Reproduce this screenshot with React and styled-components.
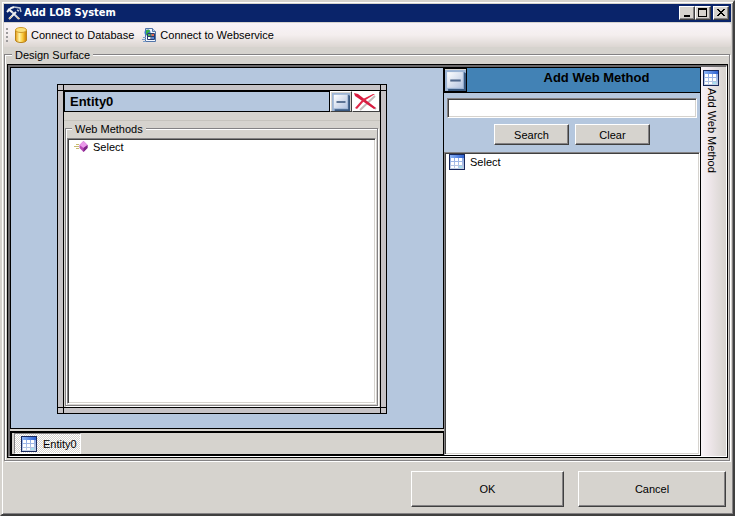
import React, { useState } from "react";
import styled, { createGlobalStyle } from "styled-components";

const GlobalStyle = createGlobalStyle`
  * {
    box-sizing: border-box;
  }
  body {
    margin: 0;
    background-color: #d6d3ce;
    color: #000;
    font: 11px/14px "Liberation Sans", Arial, sans-serif;
  }
  button, input {
    font: inherit;
    color: inherit;
  }
  svg {
    display: block;
    flex: none;
  }
`;

const Window = styled.div`
  display: flex;
  flex-direction: column;
  min-height: 100vh;
  padding: 2px;
  border: 2px solid;
  border-color: #d6d3ce #404040 #404040 #d6d3ce;
  box-shadow: inset 1px 1px 0 #fff, inset -1px -1px 0 #848284;
  background-color: #d6d3ce;
`;
const TitleBar = styled.header`
  display: flex;
  align-items: center;
  height: 18px;
  padding: 0 2px;
  background-color: #0a246a;
  color: white;
`;
const WindowTitle = styled.h1`
  flex: 1;
  margin: 0 0 0 2px;
  font: bold 11px/16px "DejaVu Sans Condensed", "Liberation Sans", sans-serif;
`;
const CaptionButton = styled.button`
  display: flex;
  align-items: center;
  justify-content: center;
  width: 16px;
  height: 14px;
  padding: 0;
  margin-left: ${(props) => (props.$spaced ? "2px" : "0")};
  border: 1px solid;
  border-color: #fff #404040 #404040 #fff;
  box-shadow: inset -1px -1px 0 #848284;
  background-color: #d6d3ce;
`;
const ToolBar = styled.nav`
  display: flex;
  align-items: center;
  height: 24px;
  margin-top: 1px;
  padding-left: 2px;
  border-radius: 0 2px 2px 0;
  background: linear-gradient(#f8f3f7, #f4eeee 50%, #dcd6d2);
`;
const Grip = styled.span`
  width: 2px;
  height: 15px;
  margin-right: 5px;
  background: repeating-linear-gradient(#9c9a9c 0 2px, transparent 2px 4px);
`;
const ToolButton = styled.button`
  display: flex;
  align-items: center;
  gap: 2px;
  padding: 0;
  margin-right: 8px;
  border: none;
  background: none;
`;

const Group = styled.fieldset`
  display: flex;
  flex: 1;
  min-width: 0;
  margin: ${(props) => (props.$inner ? "0 2px 1px 1px" : "0 1px 0 0")};
  padding: ${(props) => (props.$inner ? "3px 1px 1px" : "3px 1px 1px 2px")};
  border: 1px solid #848284;
  box-shadow: inset 1px 1px 0 #fff, 1px 1px 0 #fff;
`;
const Legend = styled.legend`
  margin-left: ${(props) => (props.$inner ? "5px" : "5px")};
  padding: 2px 3px 0;
  line-height: 12px;
  background-color: #d6d3ce;
`;
const Frame = styled.div`
  display: flex;
  flex: 1;
  min-width: 0;
  border: 1px solid #000;
`;
const FrameBevel = styled.div`
  display: flex;
  flex: 1;
  min-width: 0;
  border: solid;
  border-width: 2px 1px 1px 2px;
  border-color: #6b696b #fff #fff #6b696b;
`;

const DesignPane = styled.main`
  display: flex;
  flex-direction: column;
  flex: 1;
  min-width: 0;
`;
const Canvas = styled.div`
  flex: 1;
  padding: 16px 46px 14px;
  border: 1px solid #000;
  background-color: #b5c7de;
`;
const EntityFrame = styled.section`
  display: grid;
  grid-template: 5px 1fr 5px / 5px 1fr 5px;
  width: 330px;
  height: 330px;
  border: 1px solid #000;
  background-color: #c6c3c6;
`;
const Handle = styled.span`
  outline: 1px solid #000;
`;
const EntityBody = styled.div`
  grid-area: 2 / 2;
  display: flex;
  flex-direction: column;
  min-width: 0;
  border: 1px solid #000;
  background-color: #d6d3ce;
`;
const EntityHeader = styled.div`
  display: flex;
  height: 21px;
`;
const EntityName = styled.h2`
  flex: 1;
  margin: 0;
  padding-left: 5px;
  border: 1px solid #000;
  background-color: #b5c7de;
  font: bold 13px/20px "Liberation Sans", Arial, sans-serif;
`;
const IconButton = styled.button`
  display: flex;
  align-items: center;
  justify-content: center;
  width: ${(props) => props.$width};
  padding: 0;
  border: 1px solid;
  border-color: ${(props) => (props.$flat ? "#000" : "#fff #404040 #404040 #fff")};
  background-color: ${(props) => props.$color || "#d6d3ce"};
`;
const Divider = styled.div`
  height: 9px;
  border-bottom: 1px solid #c6c3bd;
`;

const List = styled.ul`
  flex: 1;
  min-width: 0;
  margin: 0;
  padding: ${(props) => (props.$large ? "0 4px" : "0 5px")};
  list-style: none;
  border: 1px solid;
  border-color: #848284 #fff #fff #848284;
  box-shadow: inset 1px 1px 0 #404040, inset -1px -1px 0 #d6d3ce;
  background-color: white;
`;
const Item = styled.li`
  display: flex;
  align-items: center;
  gap: ${(props) => (props.$large ? "5px" : "4px")};
  height: ${(props) => (props.$large ? "18px" : "16px")};
`;

const TaskBar = styled.div`
  display: flex;
  height: 25px;
  margin-top: 2px;
  padding-left: 2px;
  border: 2px solid #000;
  border-right-width: 1px;
`;
const TaskButton = styled.button`
  display: flex;
  align-items: center;
  gap: 6px;
  padding: 0 3px 0 6px;
  border: 1px solid;
  border-color: #848284 #fff #fff #848284;
  background: repeating-conic-gradient(#fff 0 25%, #d6d3ce 0 50%) 0 0 / 2px 2px;
`;

const SidePanel = styled.aside`
  display: flex;
  flex-direction: column;
  width: 257px;
  border: solid #000;
  border-width: 1px 1px 1px 0;
  background-color: #b5c7de;
`;
const PanelHeader = styled.div`
  display: flex;
  height: 25px;
  border-bottom: 1px solid #000;
  background-color: #4282b5;
`;
const PanelTitle = styled.h2`
  flex: 1;
  margin: 0;
  padding-left: 26px;
  text-align: center;
  font: bold 13px/20px "Liberation Sans", Arial, sans-serif;
`;
const SearchForm = styled.form`
  display: flex;
  flex-wrap: wrap;
  justify-content: center;
  gap: 6px;
  padding: 5px 3px 7px;
`;
const SearchInput = styled.input`
  width: 100%;
  height: 20px;
  padding: 0 3px;
  border: 1px solid;
  border-color: #848284 #fff #fff #848284;
  border-radius: 0;
  box-shadow: inset 1px 1px 0 #404040, inset -1px -1px 0 #d6d3ce;
  background-color: white;
  outline: none;
`;
const Button = styled.button`
  width: ${(props) => props.$width || "75px"};
  height: ${(props) => (props.$large ? "36px" : "21px")};
  padding: 0;
  border: 1px solid;
  border-color: #fff #404040 #404040 #fff;
  box-shadow: inset -1px -1px 0 #848284;
  background-color: #d6d3ce;
`;
const TabStrip = styled.div`
  width: 25px;
  padding: 3px 0 0 2px;
  background: linear-gradient(to right, #f8f3f7, #f0e8ec 30%, #d6d3ce);
`;
const SideTab = styled.button`
  display: flex;
  flex-direction: column;
  align-items: flex-start;
  gap: 2px;
  padding: 0;
  border: none;
  background: none;
`;
const SideTabText = styled.span`
  writing-mode: vertical-rl;
  line-height: 18px;
`;
const Footer = styled.footer`
  display: flex;
  justify-content: flex-end;
  gap: 14px;
  padding: 10px 5px 5px;
`;

const ToolsIcon = () => (
  <svg width="16" height="16" viewBox="0 0 16 16" fill="none">
    <path d="M5 6l8 8" stroke="#d8dce4" strokeWidth="2" />
    <path d="M10 7L3 14" stroke="#f0f0f0" strokeWidth="2" />
    <path d="M1 7l4-4 3-1M2 4l4 3" stroke="#f4f4f4" strokeWidth="2" />
    <path d="M8 2l6 1 1 4M11 5l2 1" stroke="#c0c8d4" strokeWidth="1.5" />
    <path d="M3 14l3-3" stroke="#e8c88c" strokeWidth="1" />
    <path d="M11 12l3 2" stroke="#f0c890" strokeWidth="1" />
  </svg>
);

const DatabaseIcon = () => (
  <svg width="16" height="16" viewBox="0 0 16 16">
    <defs>
      <linearGradient id="gold">
        <stop offset="0" stopColor="#e89a10" />
        <stop offset=".35" stopColor="#fff3a8" />
        <stop offset=".65" stopColor="#fbcb3c" />
        <stop offset="1" stopColor="#c87800" />
      </linearGradient>
    </defs>
    <path d="M2.500 3v10c0 1.500 2.500 2.500 5.500 2.500s5.500-1 5.500-2.500V3z" fill="url(#gold)" stroke="#b98218" />
    <ellipse cx="8" cy="3" rx="5.500" ry="2.500" fill="#fbe07a" stroke="#d09a2c" />
  </svg>
);

const WebserviceIcon = () => (
  <svg width="16" height="16" viewBox="0 0 16 16">
    <path d="M3.500 1.500h7l3 3v10h-10z" fill="#f2f7ff" stroke="#5274a8" />
    <path d="M10.500 1.500v3h3" fill="#c0d4f0" stroke="#5274a8" />
    <path d="M1 10.500h3M0 12.500h4M1 14.500h3" stroke="#7a9cc8" />
    <circle cx="5.500" cy="5.500" r="3" fill="#3a78d0" />
    <path d="M4 3.500l3-1 1 2-2 1 1 2-2 1-1-2z" fill="#38b040" />
    <path d="M5.500 6.500h7v6h-7z" fill="#fff" stroke="#283c70" />
    <path d="M6 7h3v2.500H6z" fill="#50b850" />
    <path d="M9.500 7h2.500v2.500H9.500z" fill="#e06850" />
    <path d="M9.500 10h2.500v2H9.500z" fill="#5888d8" />
    <path d="M9 7v5M6 9.500h6" stroke="#283c70" />
  </svg>
);

const TableIcon = () => (
  <svg width="16" height="16" viewBox="0 0 16 16" shapeRendering="crispEdges">
    <defs>
      <linearGradient id="tableTop">
        <stop offset="0" stopColor="#8cb4f4" />
        <stop offset="1" stopColor="#2c60d0" />
      </linearGradient>
      <linearGradient id="tableSide" x2="0" y2="1">
        <stop offset="0" stopColor="#7ba0e8" />
        <stop offset="1" stopColor="#c4d0e4" />
      </linearGradient>
    </defs>
    <path d="M0 0h16v16H0z" fill="#18285c" />
    <path d="M1 1h14v14H1z" fill="url(#tableSide)" />
    <path d="M1 1h14v3H1z" fill="url(#tableTop)" />
    <path d="M2 4h3v3H2zM6 4h3v3H6zM10 4h3v3h-3zM2 8h3v3H2zM6 8h3v3H6zM10 8h3v3h-3zM2 12h3v2H2zM6 12h3v2H6z" fill="#fff" />
    <path d="M10 12h3v2h-3z" fill="#a8e0f0" />
  </svg>
);

const MethodIcon = () => (
  <svg width="16" height="14" viewBox="0 0 16 14">
    <path d="M3 4.500h3M1 6.500h5M3 8.500h3" stroke="#c8bc70" />
    <path d="M10.500 1l4 4v3l-4 4-4-4V5z" fill="#b848b8" />
    <path d="M10.500 1l4 4-4 3-4-3z" fill="#ea9aea" />
    <path d="M10.500 8l4-3v3l-4 4z" fill="#7c2484" />
  </svg>
);

const MinusIcon = ({ size = 20 }) => (
  <svg width={size} height={size} viewBox="0 0 20 20">
    <defs>
      <linearGradient id="minusFace" x2="1" y2="1">
        <stop offset="0" stopColor="#fff" />
        <stop offset="1" stopColor="#b4c4e0" />
      </linearGradient>
    </defs>
    <path d="M0 0h20v20H0z" fill="#9cb4d4" />
    <path d="M3 20h17V3l-2-1v16H3z" fill="#385880" />
    <path d="M2 2h15v15H2z" fill="url(#minusFace)" />
    <path d="M5 9h10v2H5z" fill="#50688c" />
  </svg>
);

const DeleteIcon = () => (
  <svg width="24" height="18" viewBox="0 0 24 18" fill="none">
    <path d="M5 4l17 12M21 3L6 17" stroke="#c4bcbc" strokeWidth="2" />
    <path d="M0 0l4 1 18 14-2 1L1 3z" fill="#d81c40" />
    <path d="M21 1L10 8l-7 8-2-1 8-9 10-5z" fill="#e02848" />
  </svg>
);

const CaptionIcon = ({ d }) => (
  <svg width="12" height="10" viewBox="0 0 12 10" shapeRendering="crispEdges">
    <path d={d} fill="#000" fillRule="evenodd" />
  </svg>
);

const App = () => {
  const [query, setQuery] = useState("");

  return (
    <Window>
      <GlobalStyle />
      <TitleBar>
        <ToolsIcon />
        <WindowTitle>Add LOB System</WindowTitle>
        <CaptionButton aria-label="Minimize">
          <CaptionIcon d="M3 7h6v2H3z" />
        </CaptionButton>
        <CaptionButton aria-label="Maximize">
          <CaptionIcon d="M1 0h9v9H1zM2 2v6h7V2z" />
        </CaptionButton>
        <CaptionButton aria-label="Close" $spaced>
          <CaptionIcon d="M2 1h2v1h1v1h2V2h1V1h2v1H9v1H8v1H7v1h1v1h1v1h1v1H8V7H7V6H5v1H4v1H2V7h1V6h1V5h1V4H4V3H3V2H2z" />
        </CaptionButton>
      </TitleBar>
      <ToolBar>
        <Grip />
        <ToolButton>
          <DatabaseIcon />
          Connect to Database
        </ToolButton>
        <ToolButton>
          <WebserviceIcon />
          Connect to Webservice
        </ToolButton>
      </ToolBar>
      <Group>
        <Legend>Design Surface</Legend>
        <Frame>
          <FrameBevel>
            <DesignPane>
              <Canvas>
                <EntityFrame>
                  <Handle />
                  <span />
                  <Handle />
                  <span />
                  <EntityBody>
                    <EntityHeader>
                      <EntityName>Entity0</EntityName>
                      <IconButton $width="22px" aria-label="Collapse entity">
                        <MinusIcon size={18} />
                      </IconButton>
                      <IconButton $width="28px" $color="#fff" aria-label="Remove entity">
                        <DeleteIcon />
                      </IconButton>
                    </EntityHeader>
                    <Divider />
                    <Group $inner>
                      <Legend $inner>Web Methods</Legend>
                      <List>
                        <Item>
                          <MethodIcon />
                          Select
                        </Item>
                      </List>
                    </Group>
                  </EntityBody>
                  <span />
                  <Handle />
                  <span />
                  <Handle />
                </EntityFrame>
              </Canvas>
              <TaskBar>
                <TaskButton>
                  <TableIcon />
                  Entity0
                </TaskButton>
              </TaskBar>
            </DesignPane>
            <SidePanel>
              <PanelHeader>
                <IconButton $width="23px" $flat aria-label="Collapse panel">
                  <MinusIcon size={21} />
                </IconButton>
                <PanelTitle>Add Web Method</PanelTitle>
              </PanelHeader>
              <SearchForm onSubmit={(e) => e.preventDefault()}>
                <SearchInput
                  aria-label="Search web methods"
                  value={query}
                  onChange={(e) => setQuery(e.target.value)}
                />
                <Button type="submit">Search</Button>
                <Button type="button" onClick={() => setQuery("")}>
                  Clear
                </Button>
              </SearchForm>
              <List $large>
                <Item $large>
                  <TableIcon />
                  Select
                </Item>
              </List>
            </SidePanel>
            <TabStrip>
              <SideTab>
                <TableIcon />
                <SideTabText>Add Web Method</SideTabText>
              </SideTab>
            </TabStrip>
          </FrameBevel>
        </Frame>
      </Group>
      <Footer>
        <Button $large $width="153px">OK</Button>
        <Button $large $width="148px">Cancel</Button>
      </Footer>
    </Window>
  );
};

export default App;
